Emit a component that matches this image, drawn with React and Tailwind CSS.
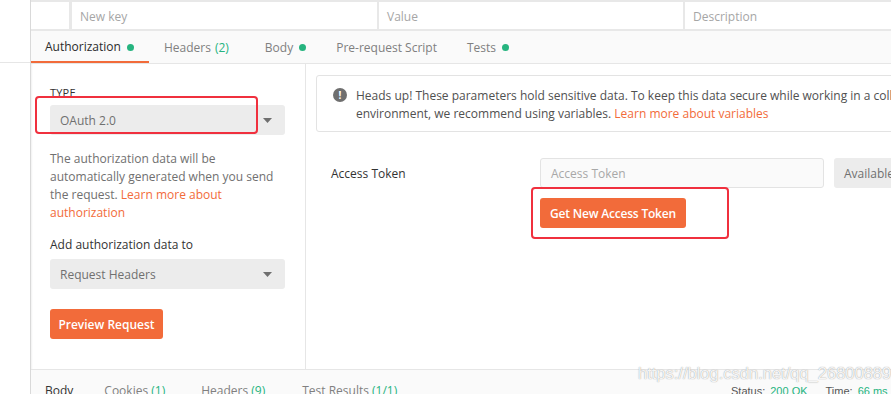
import React from "react";

const tabs = [
  { label: "Authorization", dot: true, active: true, cls: "" },
  { label: "Headers", count: "(2)", cls: "" },
  { label: "Body", dot: true, cls: "ml-[4px]" },
  { label: "Pre-request Script", cls: "ml-[-2px]" },
  { label: "Tests", cls: "ml-[-2px]", dot: true },
];

function Caret() {
  return (
    <svg width="9" height="5" viewBox="0 0 9 5" className="shrink-0">
      <path d="M0 0 L9 0 L4.5 5 Z" fill="#6f6f6f" />
    </svg>
  );
}

function Select({ value }) {
  return (
    <div className="h-[30px] rounded-[3px] bg-[#ececec] flex items-center justify-between pl-[10px] pr-[13px] pt-[1px] text-[12px] text-[#707070]">
      <span>{value}</span>
      <Caret />
    </div>
  );
}

export default function App() {
  return (
    <div className="h-[394px] w-[891px] overflow-hidden bg-white font-['Open_Sans',sans-serif] text-[12px] relative">
      <div className="flex h-full">
        {/* left gutter */}
        <div className="w-[30px] shrink-0">
          <div className="h-[63px] border-b border-[#e6e6e6]" />
        </div>

        <div className="flex-1 min-w-0 flex flex-col border-l border-[#d9d9d9] shadow-[inset_2px_0_2px_-1px_rgba(0,0,0,0.06)]">
          {/* params row */}
          <div className="h-[31px] bg-[#e8e8e8] py-[2px] flex gap-[2px] shrink-0">
            <div className="w-[38px] bg-white" />
            <div className="w-[305px] bg-white ml-[1px] flex items-center pl-[8px] pt-[2px] text-[#a6a6a6]">New key</div>
            <div className="w-[304px] bg-white flex items-center pl-[8px] pt-[2px] text-[#a6a6a6]">Value</div>
            <div className="flex-1 bg-white flex items-center pl-[8px] pt-[2px] text-[#a6a6a6]">Description</div>
          </div>

          {/* tabs */}
          <div className="h-[33px] bg-[#fafafa] border-b border-[#e6e6e6] flex shrink-0">
            {tabs.map((t) => (
              <div
                key={t.label}
                className={
                  (t.active
                    ? "h-full flex items-center pl-[14px] pr-[15px] pt-[2px] border-b-2 border-[#f26b3a] text-[#2b2b2b] mb-[-1px] "
                    : "h-full flex items-center px-[15px] pt-[1px] text-[#808080] mr-[2px] ") + t.cls
                }
              >
                <span>{t.label}</span>
                {t.count && <span className="ml-[4px] text-[#26b47f]">{t.count}</span>}
                {t.dot && <span className="ml-[6px] w-[7px] h-[7px] rounded-full bg-[#26b47f]" />}
              </div>
            ))}
          </div>

          {/* content */}
          <div className="h-[305px] flex shrink-0">
            <div className="w-[275px] shrink-0 border-r border-[#e6e6e6] pl-[19px] pr-[20px] pt-[22px] relative">
              <div className="text-[11px] leading-[14px] text-[#333] tracking-[0.2px]">TYPE</div>
              <div className="mt-[5px]">
                <Select value="OAuth 2.0" />
              </div>
              <p className="mt-[15px] leading-[18px] text-[#707070]">
                The authorization data will be automatically generated when you send the request.{" "}
                <span className="text-[#f26b3a]">Learn more about authorization</span>
              </p>
              <div className="mt-[14px] leading-[18px] text-[#333]">Add authorization data to</div>
              <div className="mt-[5px]">
                <Select value="Request Headers" />
              </div>
              <button className="mt-[20px] h-[30px] w-[113px] rounded-[3px] bg-[#f26b3a] text-white font-semibold text-[12px] pt-[1px]">
                Preview Request
              </button>
              <div className="absolute left-[4px] top-[32px] w-[223px] h-[38px] border-2 border-[#f0303e] rounded-[4px]" />
            </div>

            <div className="flex-1 min-w-0 overflow-hidden relative">
              <div className="ml-[10px] mt-[11px] w-[640px] h-[57px] border border-[#e3e3e3] rounded-[3px] pl-[16px] pt-[11px] flex">
                <div className="mt-[1px] w-[14px] h-[14px] rounded-full bg-[#6f6f6f] flex items-center justify-center text-white text-[10px] font-bold leading-none shrink-0">
                  !
                </div>
                <div className="ml-[9px] leading-[18px] text-[#505050] whitespace-nowrap">
                  Heads up! These parameters hold sensitive data. To keep this data secure while working in a collaborative
                  <br />
                  environment, we recommend using variables.{" "}
                  <span className="text-[#f26b3a]">Learn more about variables</span>
                </div>
              </div>

              <div className="mt-[26px] pl-[25px] flex items-center">
                <div className="w-[209px] shrink-0 text-[#333] pt-[2px]">Access Token</div>
                <div className="w-[284px] h-[30px] shrink-0 border border-[#e3e3e3] rounded-[3px] bg-[#fafafa] flex items-center pl-[10px] pt-[1px] text-[#a8a8a8]">
                  Access Token
                </div>
                <div className="ml-[10px] w-[120px] h-[30px] shrink-0 rounded-[3px] bg-[#ececec] flex items-center pl-[10px] pt-[1px] text-[#707070]">
                  Available Tokens
                </div>
              </div>

              <div className="mt-[10px] pl-[234px]">
                <button className="h-[30px] w-[146px] rounded-[3px] bg-[#f26b3a] text-white font-semibold text-[12px] tracking-[-0.2px] pt-[1px]">
                  Get New Access Token
                </button>
              </div>

              <div className="absolute left-[225px] top-[123px] w-[198px] h-[52px] border-2 border-[#f0303e] rounded-[4px]" />
            </div>
          </div>

          {/* response bar */}
          <div className="flex-1 bg-[#fafafa] border-t border-[#e6e6e6] flex items-start pt-[12px] pl-[14px] relative">
            <div className="flex gap-[30px] leading-[18px]">
              <span className="text-[#333]">Body</span>
              <span className="text-[#808080] ml-[1px]">
                Cookies <span className="text-[#26b47f]">(1)</span>
              </span>
              <span className="text-[#808080] ml-[6px]">
                Headers <span className="text-[#26b47f]">(9)</span>
              </span>
              <span className="text-[#808080] ml-[7px]">
                Test Results <span className="text-[#26b47f]">(1/1)</span>
              </span>
            </div>
            <div className="absolute left-[700px] top-[14px] flex font-['Liberation_Sans',Arial,sans-serif] text-[11px] leading-[14px] text-[#555] whitespace-nowrap">
              <span>Status:</span>
              <span className="ml-[5px] text-[#26b47f]">200 OK</span>
              <span className="ml-[18px]">Time:</span>
              <span className="ml-[5px] text-[#26b47f]">66 ms</span>
            </div>
          </div>
        </div>
      </div>

      <div className="absolute left-[638px] top-[363px] font-['Liberation_Sans',Arial,sans-serif] text-[16.5px] leading-[20px] text-white/90 whitespace-nowrap [text-shadow:0_0_1px_rgba(120,120,120,0.9)]">
        https://blog.csdn.net/qq_26800889
      </div>
    </div>
  );
}
